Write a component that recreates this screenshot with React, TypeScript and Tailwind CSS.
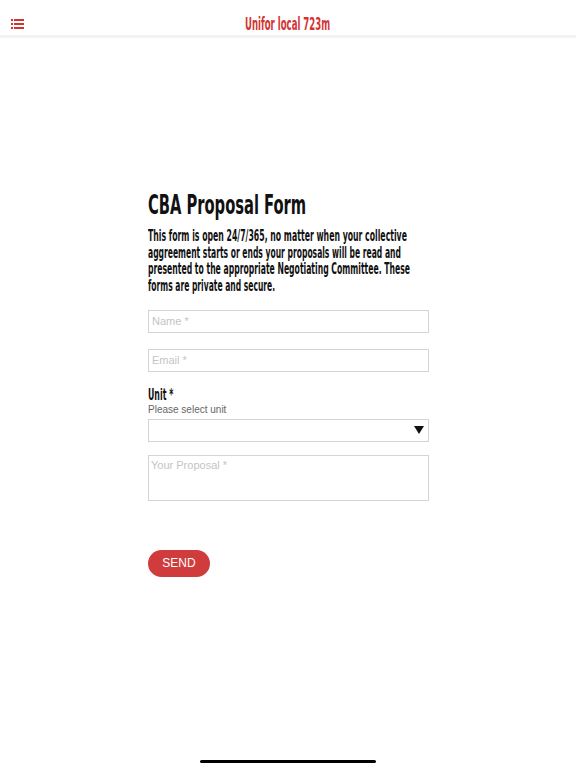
import React, { useLayoutEffect, useRef, useState } from "react";

const COND = '"DejaVu Sans Condensed", "DejaVu Sans", sans-serif';

function Fit({ text, w, className }: { text: string; w: number; className?: string }) {
  const ref = useRef<HTMLSpanElement>(null);
  const [s, setS] = useState(1);
  useLayoutEffect(() => {
    if (ref.current) {
      const nat = ref.current.offsetWidth;
      if (nat > 0) setS(w / nat);
    }
  }, [text, w]);
  return (
    <span
      ref={ref}
      className={"inline-block whitespace-nowrap origin-left " + (className ?? "")}
      style={{ transform: `scaleX(${s})`, fontFamily: COND }}
    >
      {text}
    </span>
  );
}

export default function App() {
  return (
    <div className="w-[576px] h-[768px] bg-white relative overflow-hidden" style={{ fontFamily: '"Liberation Sans", Arial, sans-serif' }}>
      <header className="h-[35px] border-b-[3px] border-[#f2f2f2] relative box-content">
        <svg className="absolute left-[11px] top-[19px]" width="13" height="10" viewBox="0 0 13 10">
          <rect x="0" y="0" width="2" height="2" fill="#d23434" />
          <rect x="3" y="0" width="10" height="2" fill="#d23434" />
          <rect x="0" y="4" width="2" height="2" fill="#d23434" />
          <rect x="3" y="4" width="10" height="2" fill="#d23434" />
          <rect x="0" y="8" width="2" height="2" fill="#d23434" />
          <rect x="3" y="8" width="10" height="2" fill="#d23434" />
        </svg>
        <div className="absolute left-[245px] top-[16px] h-[17px] leading-[17px] text-[17px] font-bold text-[#d23434]">
          <Fit text="Unifor local 723m" w={85} />
        </div>
      </header>

      <main className="pl-[148px] w-[429px] pt-[153px] flex flex-col">
        <div className="h-[27px] text-[27px] leading-[27px] font-bold text-[#111]">
          <Fit text="CBA Proposal Form" w={158} />
        </div>
        <div className="mt-[10px] flex flex-col text-[15px] leading-[16.7px] font-bold text-[#111]">
          <div className="h-[16.7px]"><Fit text="This form is open 24/7/365, no matter when your collective" w={259} /></div>
          <div className="h-[16.7px]"><Fit text="aggreement starts or ends your proposals will be read and" w={253} /></div>
          <div className="h-[16.7px]"><Fit text="presented to the appropriate Negotiating Committee.  These" w={262} /></div>
          <div className="h-[16.7px]"><Fit text="forms are private and secure." w={127} /></div>
        </div>

        <div className="mt-[15px] h-[23px] w-[281px] border border-[#d4d4d4] flex items-center px-[3px] text-[11px] text-[#c4c4c4]">Name *</div>
        <div className="mt-[16px] h-[23px] w-[281px] border border-[#d4d4d4] flex items-center px-[3px] text-[11px] text-[#c4c4c4]">Email *</div>

        <div className="mt-[16px] h-[14px] leading-[14px] text-[15px] font-bold text-[#111]">
          <Fit text="Unit *" w={25} />
        </div>
        <div className="mt-[2px] h-[12px] text-[10px] leading-[12px] text-[#666]">Please select unit</div>
        <div className="mt-[3px] h-[23px] w-[281px] border border-[#d4d4d4] flex items-center justify-end pr-[4px]">
          <svg width="10" height="8" viewBox="0 0 10 8"><path d="M0 0H10L5 8Z" fill="#111" /></svg>
        </div>

        <div className="mt-[13px] h-[46px] w-[281px] border border-[#d4d4d4] px-[2px] pt-[3px] text-[11px] leading-[13px] text-[#c4c4c4]">Your Proposal *</div>

        <button className="mt-[49px] h-[27px] w-[62px] rounded-full bg-[#d03b3b] text-white text-[12px] flex items-center justify-center">SEND</button>
      </main>

      <div className="absolute left-[200px] top-[760px] w-[176px] h-[3px] rounded-full bg-black" />
    </div>
  );
}
